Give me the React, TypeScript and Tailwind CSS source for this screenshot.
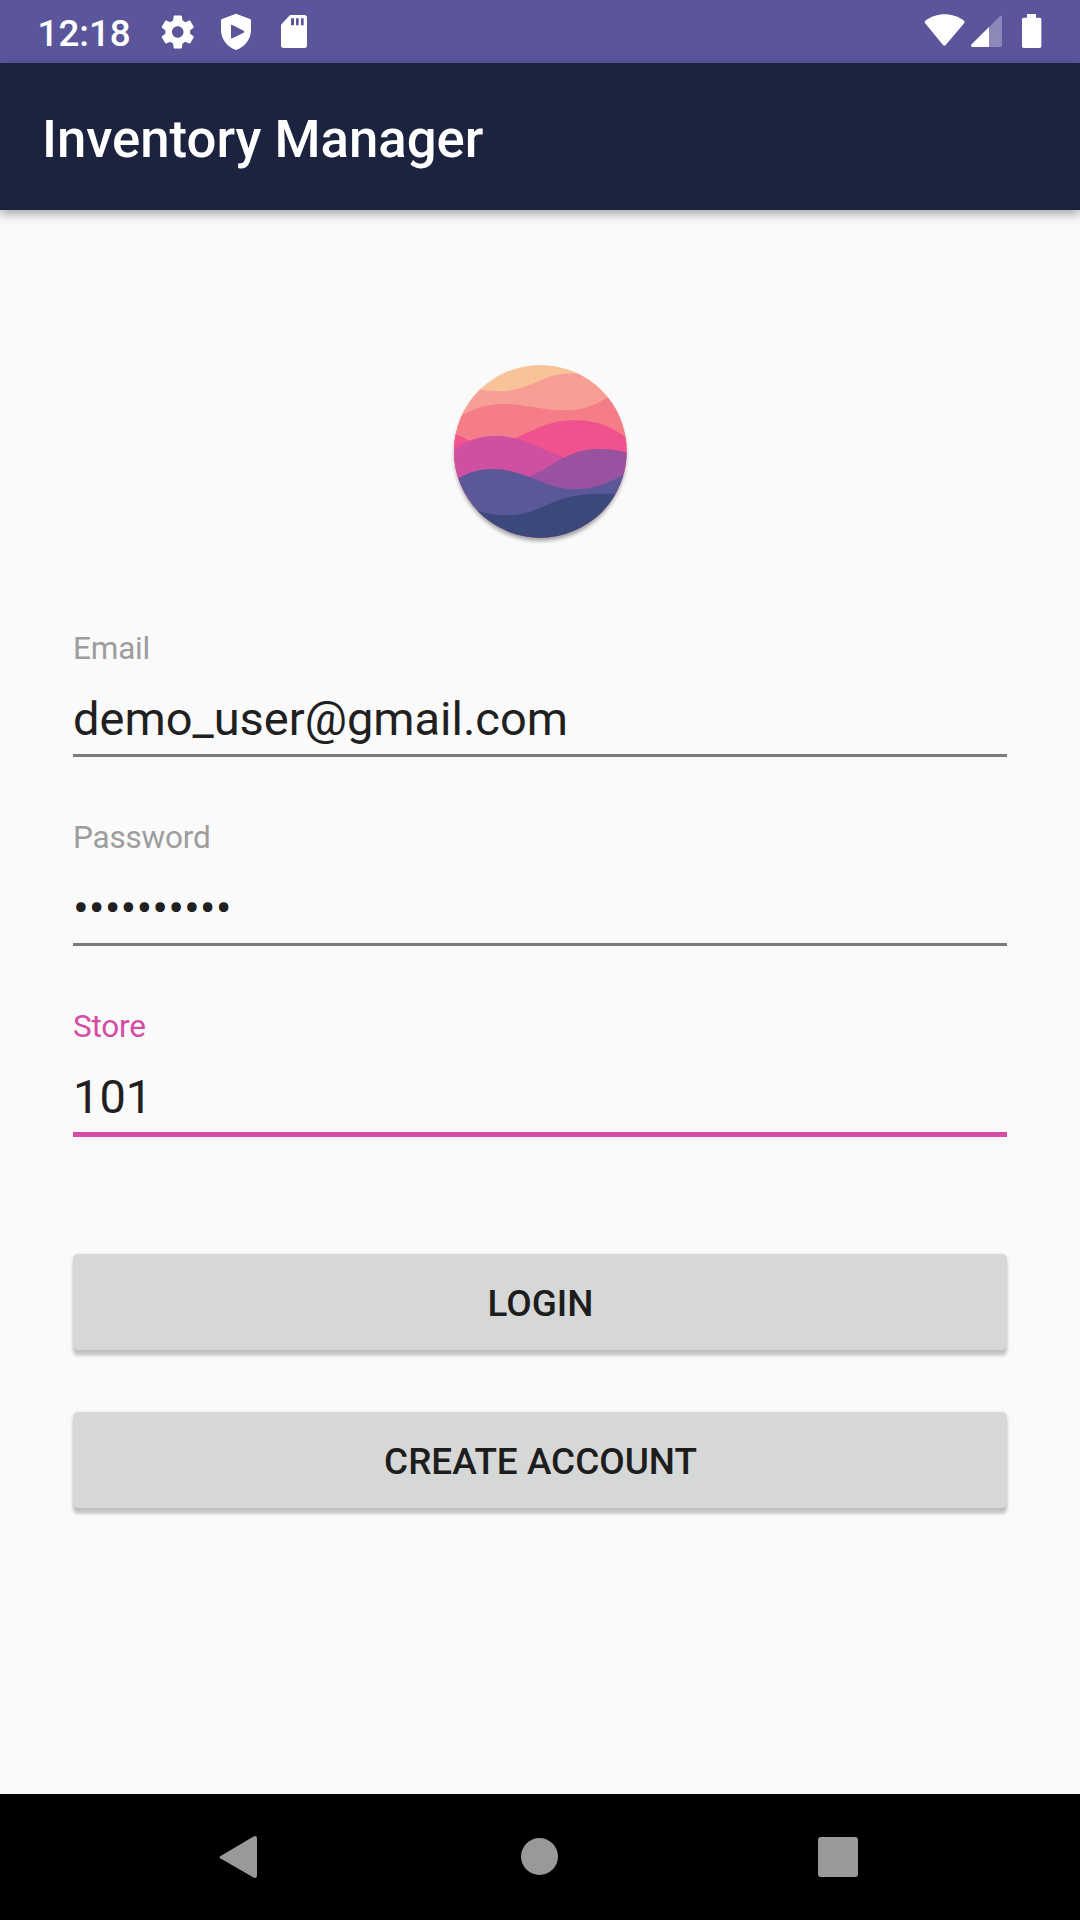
import React from 'react';

function StatusBar() {
  return (
    <div className="flex h-[63px] justify-between bg-[#5b569c]">
      <div className="flex pl-[37.5px]">
        <span className="w-[120.5px] text-[36.75px] leading-[67px] font-medium text-white">12:18</span>
        <svg className="mt-[11.5px] h-[40px] w-[39.5px]" viewBox="0 0 24 24" fill="#fff">
          <path d="M19.43 12.98c.04-.32.07-.64.07-.98s-.03-.66-.07-.98l2.11-1.65c.19-.15.24-.42.12-.64l-2-3.46c-.12-.22-.39-.3-.61-.22l-2.49 1c-.52-.4-1.08-.73-1.69-.98l-.38-2.65C14.46 2.18 14.25 2 14 2h-4c-.25 0-.46.18-.49.42l-.38 2.65c-.61.25-1.17.59-1.69.98l-2.49-1c-.23-.09-.49 0-.61.22l-2 3.46c-.13.22-.07.49.12.64l2.11 1.65c-.04.32-.07.65-.07.98s.03.66.07.98l-2.11 1.65c-.19.15-.24.42-.12.64l2 3.46c.12.22.39.3.61.22l2.49-1c.52.4 1.08.73 1.69.98l.38 2.65c.03.24.24.42.49.42h4c.25 0 .46-.18.49-.42l.38-2.65c.61-.25 1.17-.59 1.69-.98l2.49 1c.23.09.49 0 .61-.22l2-3.46c.12-.22.07-.49-.12-.64l-2.11-1.65zM12 15.5c-1.93 0-3.5-1.57-3.5-3.5s1.57-3.5 3.5-3.5 3.5 1.57 3.5 3.5-1.57 3.5-3.5 3.5z" />
        </svg>
        <svg className="ml-[22.5px] h-[63px] w-[32px]" viewBox="660 0 96 189" fill="#fff" fillRule="evenodd">
          <path d="M708 41L750 57Q753 58 753 62V91C753 118 733 142 708 150C683 142 663 118 663 91V62Q663 58 666 57ZM693 77V113Q693 117 697 115L731 98Q735 95 731 92L697 75Q693 73 693 77Z" />
        </svg>
        <svg className="ml-[28px] h-[63px] w-[28px]" viewBox="840 0 84 189" fill="#fff" fillRule="evenodd">
          <path d="M872 45H913Q921 45 921 53V136Q921 144 913 144H851Q843 144 843 136V76Q843 74 845 72L868 47Q870 45 872 45ZM873 55V76H882V55ZM888 55V76H896V55ZM903 55V76H911V55Z" />
        </svg>
      </div>
      <svg className="h-[63px] w-[180px]" viewBox="0 0 540 189" fill="#fff">
        <path d="M75 69Q73 65 76 62C108 36 160 36 192 62Q195 65 193 69L137 135Q133 139 129 135Z" />
        <path d="M267 82L298 50Q306 43 306 53V135Q306 141 300 141H267Z" opacity=".3" />
        <path d="M267 81V141H219Q209 141 215 133Z" />
        <path d="M381 42H408V53H419Q424 53 424 58V139Q424 144 419 144H371Q366 144 366 139V58Q366 53 371 53H381Z" />
      </svg>
    </div>
  );
}

function Logo() {
  return (
    <svg className="mx-auto h-[200px] w-[200px]" viewBox="0 0 600 600">
      <defs>
        <clipPath id="disc"><circle cx="301" cy="304" r="259" /></clipPath>
        <filter id="soft" x="-10%" y="-10%" width="120%" height="125%"><feGaussianBlur stdDeviation="6" /></filter>
      </defs>
      <circle cx="301" cy="315" r="257" fill="#000" opacity=".38" filter="url(#soft)" />
      <g clipPath="url(#disc)">
        <path fill="#f8c399" d="M0 0H600V600H0Z" />
        <path fill="#f79e95" d="M0 100H60L121 118C260 145 290 70 395 70H600V600H0Z" />
        <path fill="#f47d88" d="M0 230L65 195C190 130 260 180 372 181C440 181 470 160 502 143L600 100V600H0Z" />
        <path fill="#ef528f" d="M0 230L46 253L90 272L225 265C320 221 345 211 410 211C480 211 530 240 560 265V600H0Z" />
        <path fill="#cf50a0" d="M0 330L42 300C80 270 120 258 165 258C245 258 300 297 373 322L400 600H0Z" />
        <path fill="#9852a0" d="M230 410L268 381C350 341 390 296 480 296Q520 296 560 307L600 450L400 520Z" />
        <path fill="#5a5899" d="M0 410L55 385C90 365 120 357 157 357C260 357 310 418 405 418C470 418 510 395 550 375L600 350V600H0Z" />
        <path fill="#3b487c" d="M0 450L112 482C160 496 180 496 205 496C305 496 330 431 475 431H600V600H0Z" />
      </g>
    </svg>
  );
}

function Field({ label, value, active = false }: { label: string; value: string; active?: boolean }) {
  return (
    <div className="h-[189px]">
      <div className={`h-[37px] text-[31.5px] leading-[37px] tracking-[-0.2px] ${active ? 'text-[#d44ca3]' : 'text-[#9d9d9d]'}`}>{label}</div>
      <div className="mt-[24px] h-[63px] text-[47px] leading-[56px] text-[#202020]">{value}</div>
      <div className={active ? 'h-[5px] bg-[#d44ca3]' : 'h-[3px] bg-[#7b7b7b]'} />
    </div>
  );
}

function ActionButton({ children }: { children: React.ReactNode }) {
  return (
    <button className="block h-[96px] w-full rounded-[5px] bg-[#d6d8d7] pl-px text-center text-[36.9px] leading-[100px] font-medium text-[#1d1d1d] shadow-[0_6px_3px_rgba(0,0,0,0.19),0_1px_4px_rgba(0,0,0,0.12)]">
      {children}
    </button>
  );
}

export default function App() {
  return (
    <div className="flex h-[1920px] w-[1080px] flex-col bg-[#fafafa] font-['Roboto',sans-serif]">
      <StatusBar />
      <header className="h-[147px] bg-[#1c233f] pl-[42px] shadow-[0_4px_10px_rgba(0,0,0,0.35)]">
        <h1 className="pt-[45px] text-[52.7px] leading-[62px] font-medium text-white">Inventory Manager</h1>
      </header>
      <main className="flex-1 px-[73px] pt-[140px]">
        <Logo />
        <div className="mt-[80px]">
          <Field label="Email" value="demo_user@gmail.com" />
          <Field label="Password" value="••••••••••" />
          <Field label="Store" value="101" active />
        </div>
        <div className="mt-[57px] flex flex-col gap-[62px]">
          <ActionButton>LOGIN</ActionButton>
          <ActionButton>CREATE ACCOUNT</ActionButton>
        </div>
      </main>
      <nav className="flex h-[126px] items-start bg-black">
        <svg className="mt-[41px] ml-[218px] h-[44px] w-[40px]" viewBox="0 0 40 44" fill="#999">
          <path d="M2.2 21.2L35.5 1.5Q39 0 39 4V40Q39 44 35.5 42.5L2.2 23.2Q.8 22.2 2.2 21.2Z" />
        </svg>
        <div className="mt-[44px] ml-[263px] h-[37px] w-[37px] rounded-full bg-[#999]" />
        <div className="mt-[43px] ml-[260px] h-[40px] w-[39.5px] rounded-[3px] bg-[#999]" />
      </nav>
    </div>
  );
}
